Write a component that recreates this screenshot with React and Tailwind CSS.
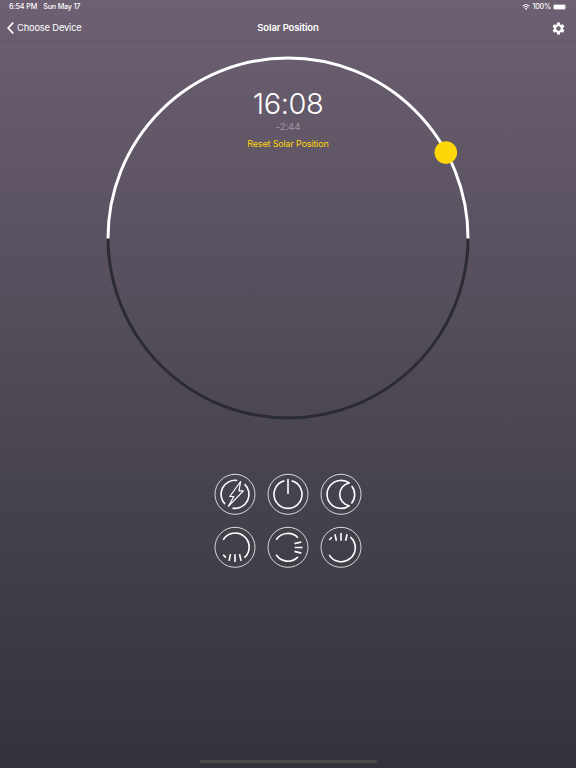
const MODES = [
  {
    name: "flash",
    paths: [
      "M23.2 7.2A14 14 0 0 0 11 30.8",
      "M30.6 10.8A14 14 0 0 1 18.5 34.8",
    ],
    thin: "M26.6 8.2L15.8 23.2L19.8 23.2L14.4 33L29.4 17.6L25 17.6Z",
  },
  {
    name: "power",
    paths: ["M17.4 7.5A14 14 0 1 0 24.6 7.5", "M21 5.8V20.6"],
  },
  {
    name: "moon",
    paths: [
      "M29.2 9.7A14 14 0 1 0 29.2 32.5A11.6 11.6 0 0 1 29.2 9.7Z",
      "M31.7 12.6A14 14 0 0 1 31.4 30.3",
    ],
  },
  {
    name: "sunrise",
    paths: [
      "M9.2 13.5A14 14 0 1 1 30.4 31.3",
      "M9.2 28.4L11.8 31.3M16.5 27.8L15.1 34.6M21 28V35.8M25.5 27.8L27.1 34.6",
    ],
  },
  {
    name: "midday",
    paths: [
      "M9.2 13.5A14 14 0 0 1 31 11.4",
      "M9.2 28.5A14 14 0 0 0 31 30.6",
      "M27.5 17.3L34.3 15.7M27.8 21.2H35.5M27.5 25.1L34.3 26.8",
    ],
  },
  {
    name: "sunset",
    paths: [
      "M30.4 10.8A14 14 0 1 1 9.2 28.5",
      "M9.3 13.7L11.8 11M14.9 8L16.4 14.4M21 6.6V14.4M27.1 8L25.6 14.4",
    ],
  },
];

function StatusBar() {
  return (
    <div className="flex h-[14px] items-center justify-between pl-[9px] pr-[9px] text-[7.2px] font-medium leading-none">
      <div className="flex gap-[6px] tracking-[-0.1px]">
        <span>6:54 PM</span>
        <span className="tracking-[-0.2px]">Sun May 17</span>
      </div>
      <div className="flex items-center gap-[2px]">
        <svg width="8" height="6" viewBox="0 0 16 12" fill="currentColor">
          <path d="M8 12L5.5 9.3a3.6 3.6 0 0 1 5 0Z" />
          <path
            d="M3.4 7a6.5 6.5 0 0 1 9.2 0M1 4.3a10 10 0 0 1 14 0"
            fill="none"
            stroke="currentColor"
            strokeWidth="2"
          />
        </svg>
        <span className="tracking-[-0.2px]">100%</span>
        <svg width="14" height="6" viewBox="0 0 14 6">
          <rect x=".25" y=".25" width="12.3" height="5.5" rx="1.5" fill="none" stroke="#b5afb7" strokeWidth=".5" />
          <rect x=".7" y=".7" width="11.4" height="4.6" rx="1.1" fill="#fff" />
          <path d="M13.2 2v2q.6-.3.6-1t-.6-1" fill="#b5afb7" />
        </svg>
      </div>
    </div>
  );
}

function NavBar() {
  return (
    <nav className="grid h-7 grid-cols-3 items-center border-b border-[#62586a] pl-[7px] pr-[11px] pt-px text-[9.3px]">
      <button className="flex items-center gap-[3px]">
        <svg width="7" height="12" viewBox="0 0 7 12" fill="none" stroke="currentColor" strokeWidth="1.7">
          <path d="M6.2.6L1.2 6L6.2 11.4" />
        </svg>
        <span className="tracking-[-0.15px]">Choose Device</span>
      </button>
      <h1 className="pl-1 text-center text-[9.5px] font-semibold tracking-[-0.12px]">
        Solar Position
      </h1>
      <button className="justify-self-end" aria-label="Settings">
        <svg width="13" height="13" viewBox="1.5 1.5 21 21" fill="currentColor">
          <path d="M19.14 12.94c.04-.3.06-.61.06-.94 0-.32-.02-.64-.07-.94l2.03-1.58a.49.49 0 0 0 .12-.61l-1.92-3.32a.488.488 0 0 0-.59-.22l-2.39.96c-.5-.38-1.03-.7-1.62-.94l-.36-2.54a.484.484 0 0 0-.48-.41h-3.84c-.24 0-.43.17-.47.41l-.36 2.54c-.59.24-1.13.57-1.62.94l-2.39-.96c-.22-.08-.47 0-.59.22L2.74 8.87c-.12.21-.08.47.12.61l2.03 1.58c-.05.3-.09.63-.09.94s.02.64.07.94l-2.03 1.58a.49.49 0 0 0-.12.61l1.92 3.32c.12.22.37.29.59.22l2.39-.96c.5.38 1.03.7 1.62.94l.36 2.54c.05.24.24.41.48.41h3.84c.24 0 .44-.17.47-.41l.36-2.54c.59-.24 1.13-.56 1.62-.94l2.39.96c.22.08.47 0 .59-.22l1.92-3.32c.12-.22.07-.47-.12-.61zM12 15.6A3.6 3.6 0 1 1 12 8.4a3.6 3.6 0 0 1 0 7.2" />
        </svg>
      </button>
    </nav>
  );
}

function SolarDial() {
  return (
    <section className="relative mx-auto mt-[14px] h-[364px] w-[364px]">
      <svg className="absolute inset-0" width="364" height="364" viewBox="0 0 364 364" fill="none">
        <path d="M2 182A180 180 0 0 0 362 182" stroke="#2b2c32" strokeWidth="3" />
        <path d="M2 182.4V182A180 180 0 0 1 362 182V182.4" stroke="#fff" strokeWidth="3" />
        <circle cx="339.8" cy="96.6" r="11.3" fill="#ffd60a" />
      </svg>
      <div className="relative flex flex-col items-center pt-[32px]">
        <span className="text-[29px] font-[350] leading-[32px] tracking-[-0.4px]">16:08</span>
        <span className="mt-[1px] text-[9.6px] leading-[12px] tracking-[-0.1px] text-[#9d97a1]">-2:44</span>
        <button className="mt-[5px] text-[9px] leading-[12px] tracking-[-0.15px] text-[#ffd60a]">
          Reset Solar Position
        </button>
      </div>
    </section>
  );
}

function ModeButton({ mode }) {
  return (
    <button aria-label={mode.name} className="h-[42px] w-[42px]">
      <svg width="42" height="42" viewBox="0 -0.3 42 42" fill="none" stroke="#fff">
        <circle cx="21" cy="21" r="20" strokeWidth="0.8" />
        {mode.paths.map((d) => (
          <path key={d} d={d} strokeWidth="1.6" strokeLinejoin="round" />
        ))}
        {mode.thin && <path d={mode.thin} strokeWidth="1.2" strokeLinejoin="round" />}
      </svg>
    </button>
  );
}

export default function App() {
  return (
    <main className="flex h-screen w-full flex-col overflow-hidden bg-linear-to-b from-[#6d6072] to-[#32333a] font-['Inter','Liberation_Sans',sans-serif] text-white">
      <StatusBar />
      <NavBar />
      <SolarDial />
      <div className="mx-auto mt-[53px] grid grid-cols-3 gap-[11px]">
        {MODES.map((mode) => (
          <ModeButton key={mode.name} mode={mode} />
        ))}
      </div>
      <div className="mx-auto mb-[5px] mt-auto h-[3px] w-[177px] rounded-full bg-[#4b4b4c]" />
    </main>
  );
}
